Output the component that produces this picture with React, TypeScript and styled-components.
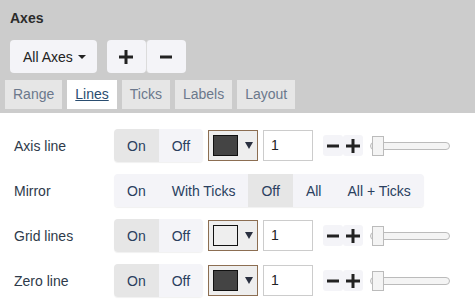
import React from 'react';
import styled, { createGlobalStyle } from 'styled-components';

const GlobalStyle = createGlobalStyle`
  body {
    margin: 0;
    background: #fff;
    font-family: "Liberation Sans", Arial, sans-serif;
    font-size: 14px;
    color: #2a3f5f;
  }
`;

const PlusIcon = ({ size = 14, stroke = 3 }: { size?: number; stroke?: number }) => (
  <svg width={size} height={size} viewBox={`0 0 ${size} ${size}`}>
    <rect x={0} y={(size - stroke) / 2} width={size} height={stroke} fill="#222" />
    <rect x={(size - stroke) / 2} y={0} width={stroke} height={size} fill="#222" />
  </svg>
);

const MinusIcon = ({ size = 12, stroke = 3 }: { size?: number; stroke?: number }) => (
  <svg width={size} height={size} viewBox={`0 0 ${size} ${size}`}>
    <rect x={0} y={(size - stroke) / 2} width={size} height={stroke} fill="#222" />
  </svg>
);

type RowData = {
  label: string;
  options: string[];
  active: number;
  color?: string;
};

const rows: RowData[] = [
  { label: 'Axis line', options: ['On', 'Off'], active: 0, color: '#444444' },
  { label: 'Mirror', options: ['On', 'With Ticks', 'Off', 'All', 'All + Ticks'], active: 2 },
  { label: 'Grid lines', options: ['On', 'Off'], active: 0, color: '#eeeeee' },
  { label: 'Zero line', options: ['On', 'Off'], active: 0, color: '#444444' },
];

const tabs = ['Range', 'Lines', 'Ticks', 'Labels', 'Layout'];

const App = () => {
  return (
    <Page>
      <GlobalStyle />
      <Header>
        <Title>Axes</Title>
        <Toolbar>
          <DropButton>
            All Axes <Caret />
          </DropButton>
          <BtnGroup>
            <BigBtn>
              <PlusIcon size={14} stroke={3} />
            </BigBtn>
            <BigBtn>
              <MinusIcon size={12} stroke={3} />
            </BigBtn>
          </BtnGroup>
        </Toolbar>
        <Tabs>
          {tabs.map((t) => (
            <Tab key={t} $active={t === 'Lines'}>
              {t}
            </Tab>
          ))}
        </Tabs>
      </Header>
      <Body>
        {rows.map((r) => (
          <Row key={r.label}>
            <Label>{r.label}</Label>
            <Controls>
              <Segmented>
                {r.options.map((o, i) => (
                  <Segment key={o} $active={i === r.active}>
                    {o}
                  </Segment>
                ))}
              </Segmented>
              {r.color && (
                <>
                  <ColorPicker>
                    <Swatch $color={r.color} />
                    <Arrow />
                  </ColorPicker>
                  <NumberBox>1</NumberBox>
                  <StepGroup>
                    <StepBtn>
                      <MinusIcon size={12} stroke={3} />
                    </StepBtn>
                    <StepBtn>
                      <PlusIcon size={14} stroke={3} />
                    </StepBtn>
                  </StepGroup>
                  <Slider>
                    <Thumb />
                  </Slider>
                </>
              )}
            </Controls>
          </Row>
        ))}
      </Body>
    </Page>
  );
};

export default App;

const Page = styled.div`
  width: 475px;
  height: 308px;
  overflow: hidden;
`;

const Header = styled.div`
  background-color: #cccccc;
  padding: 8px 5px 4px;
`;

const Title = styled.div`
  font-weight: bold;
  font-size: 14px;
  line-height: 20px;
  color: #2b2b2b;
  padding-left: 5px;
`;

const Toolbar = styled.div`
  display: flex;
  align-items: center;
  gap: 10px;
  margin-top: 12px;
  padding-left: 5px;
`;

const DropButton = styled.div`
  display: flex;
  align-items: center;
  gap: 5px;
  height: 33px;
  padding: 0 11px 0 13px;
  background-color: #f4f4f8;
  border-radius: 4px;
  color: #222;
  font-size: 14px;
`;

const Caret = styled.span`
  width: 0;
  height: 0;
  border-left: 4px solid transparent;
  border-right: 4px solid transparent;
  border-top: 4px solid #222;
`;

const BtnGroup = styled.div`
  display: flex;
`;

const BigBtn = styled.div`
  display: flex;
  align-items: center;
  justify-content: center;
  width: 39px;
  height: 33px;
  background-color: #f4f4f8;
  border-radius: 4px;
  & + & {
    border-left: 1px solid #dcdcdc;
  }
`;

const Tabs = styled.div`
  display: flex;
  gap: 5px;
  margin-top: 7px;
`;

const Tab = styled.div<{ $active?: boolean }>`
  height: 29px;
  line-height: 29px;
  padding: 0 8px;
  font-size: 14px;
  background-color: ${(p) => (p.$active ? '#ffffff' : '#e6e6e6')};
  color: ${(p) => (p.$active ? '#2a4d70' : '#6b788c')};
  text-decoration: ${(p) => (p.$active ? 'underline' : 'none')};
`;

const Body = styled.div`
  display: flex;
  flex-direction: column;
  gap: 12px;
  padding: 16px 0 0 14px;
`;

const Row = styled.div`
  display: flex;
  align-items: center;
  height: 33px;
`;

const Label = styled.div`
  width: 100px;
  font-size: 14px;
  color: #2e3a4a;
`;

const Controls = styled.div`
  display: flex;
  align-items: center;
  gap: 5px;
`;

const Segmented = styled.div`
  display: flex;
  height: 33px;
  border-radius: 4px;
  overflow: hidden;
  box-shadow: 0 1px 1px rgba(0, 0, 0, 0.06);
`;

const Segment = styled.div<{ $active?: boolean }>`
  display: flex;
  align-items: center;
  padding: 0 13px;
  font-size: 14px;
  color: #2a3f5f;
  background-color: ${(p) => (p.$active ? '#e6e6e6' : '#f4f4f8')};
`;

const ColorPicker = styled.div`
  display: flex;
  align-items: center;
  gap: 7px;
  width: 50px;
  height: 31px;
  box-sizing: border-box;
  padding-left: 4px;
  border: 1px solid #8c6e52;
  background-color: #eeeeee;
`;

const Swatch = styled.div<{ $color: string }>`
  width: 25px;
  height: 21px;
  box-sizing: border-box;
  border: 1px solid #111;
  background-color: ${(p) => p.$color};
`;

const Arrow = styled.span`
  width: 0;
  height: 0;
  border-left: 4px solid transparent;
  border-right: 4px solid transparent;
  border-top: 7px solid #2a3040;
`;

const NumberBox = styled.div`
  width: 50px;
  height: 31px;
  box-sizing: border-box;
  border: 1px solid #cccccc;
  padding-left: 7px;
  line-height: 29px;
  font-size: 14px;
  color: #222;
`;

const StepGroup = styled.div`
  display: flex;
  margin-left: 5px;
`;

const StepBtn = styled.div`
  display: flex;
  align-items: center;
  justify-content: center;
  width: 20px;
  height: 21px;
  background-color: #f4f4f8;
  border-radius: 3px;
`;

const Slider = styled.div`
  position: relative;
  margin-left: 2px;
  width: 80px;
  height: 8px;
  box-sizing: border-box;
  border: 1px solid #bbbbbb;
  border-radius: 4px;
  background-color: #f4f4f4;
`;

const Thumb = styled.div`
  position: absolute;
  left: 1px;
  top: -7px;
  width: 12px;
  height: 20px;
  box-sizing: border-box;
  border: 1px solid #bbbbbb;
  background-color: #f4f4f4;
`;
